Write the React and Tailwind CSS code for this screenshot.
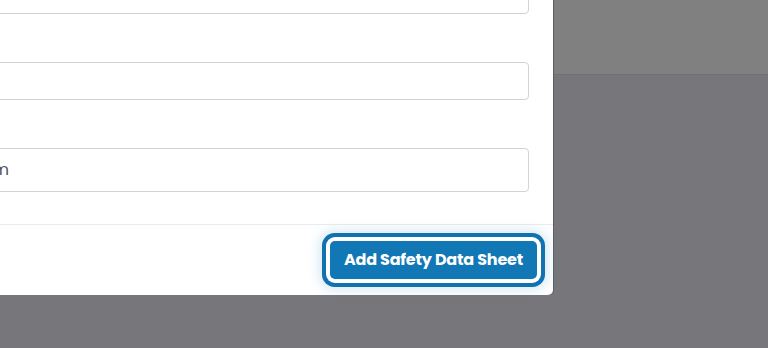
const fieldClass = "w-full border border-[#ced4da] rounded-[4px] bg-white px-3 text-[16px] text-[#495057] flex items-center";

const Field = ({label, height, value}) =>
{
    return (
        <div className="mb-4">
            <label className="block mb-2 text-[15px] leading-6 text-[#212529]">{label}</label>
            <div className={`${fieldClass} ${height}`}>
                <span className="w-[272px] text-right whitespace-nowrap">{value}</span>
            </div>
        </div>
    );
};

export default function App()
{
    return (
        <div
            className="relative w-[768px] h-[348px] overflow-hidden bg-[#77777b]"
            style={{fontFamily: "Poppins, 'Open Sans', 'Noto Sans', sans-serif"}}
        >
            <div className="h-[75px] bg-[#808080] border-b border-[#717174]" />

            <div className="absolute left-[-300px] top-[-72px] w-[853px] bg-white rounded-[5px] shadow-[1px_0_0_#5f5f62]">
                <div className="px-6 pt-4">
                    <Field label="Product" height="h-[38px]" value="" />
                    <Field label="Supplier" height="h-[38px]" value="" />
                    <Field label="Location" height="h-[44px]" value="Main Storage Room" />
                    <div className="h-4" />
                </div>
                <div className="border-t border-[#e9ecef] px-4 py-4 flex justify-end">
                    <button
                        className="h-[38px] px-[14px] rounded-[5px] bg-[#1177b5] text-white text-[16px] font-bold tracking-[-0.2px] shadow-[0_0_0_4px_#ffffff,0_0_0_8px_#1272b0,0_0_12px_10px_rgba(40,140,200,0.22)]"
                    >
                        Add Safety Data Sheet
                    </button>
                </div>
            </div>
        </div>
    );
}
